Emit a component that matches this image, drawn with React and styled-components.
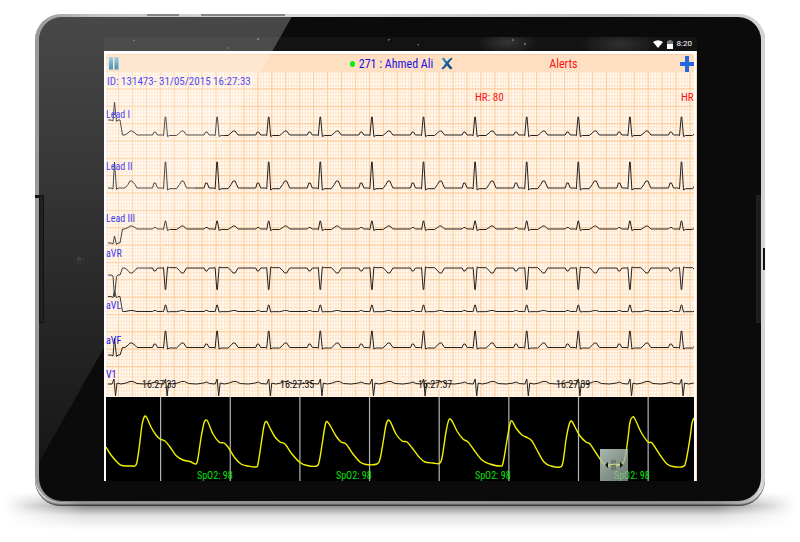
import React from "react";
import styled, { createGlobalStyle } from "styled-components";

const BEAT = 51.6;

// offsets are y positions inside the chart: base line, R peak, S dip, T and P waves
const LEADS = [
  { name: "Lead I", labelY: 46, base: 63, r: 45, s: 64.5, t: 59, p: 60, startBase: 48, startR: 30 },
  { name: "Lead II", labelY: 98, base: 116, r: 90, s: 118, t: 109, p: 111, startBase: 116, startR: 90 },
  { name: "Lead III", labelY: 150, base: 157, r: 149, s: 158.5, t: 154, p: 155.5, startBase: 171, startR: 164 },
  { name: "aVR", labelY: 185, base: 196, r: 217.5, s: 195, t: 201, p: 199, startBase: 203, startR: 225 },
  { name: "aVL", labelY: 237, base: 239.5, r: 233, s: 240, t: 238.5, p: 238.5, startBase: 224.5, startR: 219 },
  { name: "aVF", labelY: 272, base: 275.5, r: 259, s: 277, t: 271, p: 272, startBase: 283, startR: 266 },
];

const TIMES = ["16:27:33", "16:27:35", "16:27:37", "16:27:39"];

const PULSE = [
  [0, 50], [5, 58], [12, 66], [16, 68.5], [26, 69], [29, 69], [31, 65], [33.5, 48], [36, 28], [38.5, 19.5],
  [41, 21], [45, 30], [50, 38], [54, 42], [59, 44], [64, 50], [70, 58.5], [77, 63], [84, 64.5], [90, 67],
  [92, 61], [95, 41], [98, 26], [100, 23], [102, 25], [107, 37], [113, 45], [118, 46], [122, 50], [129, 61],
  [135, 67], [142, 69], [150, 70], [152, 67], [155, 48], [158, 29], [160.5, 24.5], [164, 31], [169, 40],
  [174, 45], [179, 47], [186, 57], [194, 65.5], [201, 68.5], [211, 69], [213.5, 63], [216, 48], [219, 29],
  [221, 24.5], [225, 30], [230, 39], [235, 45], [240, 47], [247, 57], [254, 65], [260, 67.5], [271, 67],
  [274, 62], [277, 46], [280, 28], [282.5, 23], [285, 26], [290, 37], [296, 44], [301, 45], [307, 52],
  [313, 60], [319, 65], [327, 66], [333, 66.5], [336, 61], [340, 35], [343, 22.5], [346, 24], [351, 34],
  [357, 42], [362, 45], [368, 53], [376, 63], [384, 67], [394, 69], [397, 66], [401, 43], [404, 27],
  [406, 24], [410, 31], [416, 38], [422, 41], [426, 44], [431, 53], [438, 65], [445, 69], [454, 70],
  [457, 65], [460, 43], [463, 28], [465.5, 24], [469, 30], [474, 39], [480, 45], [484, 47], [490, 56],
  [497, 66], [502, 69], [515, 67.5], [519, 61], [522, 41], [524, 25], [526.5, 20], [529, 22], [535, 35],
  [542, 45], [546, 46], [554, 58], [561, 67], [567, 69.5], [577, 69.5], [580, 64], [584, 41], [586, 26],
  [588, 21],
];

function leadPath({ base, r, s, t, p, startBase, startR }) {
  const d = [
    `M2 ${startBase}H5L7 ${startBase + 1}L8.5 ${startR}L10.5 ${startBase + 1.5}`,
    `L12 ${startBase}H14L16.5 ${base}H19L22 ${(base + t) / 2}L24 ${t}H26L29 ${(base + t) / 2}L31 ${base}`,
  ];
  for (let i = 0; i < 11; i += 1) {
    const x = 59.5 + i * BEAT;
    d.push(
      `H${x - 13}L${x - 11.5} ${p}H${x - 10}L${x - 8} ${base}H${x - 3}L${x - 2} ${s - (s - base) / 2}`,
      `L${x - 0.3} ${r}H${x + 0.3}L${x + 2} ${s}L${x + 4} ${base + (s - base) / 3}`,
      `H${x + 11}L${x + 14} ${(base + t) / 2}L${x + 16} ${t}H${x + 18}L${x + 21} ${base}`
    );
  }
  return d.join("");
}

function chestPath() {
  const d = ["M2 312H6"];
  for (let i = 0; i < 12; i += 1) {
    const x = 8 + i * BEAT;
    d.push(
      `L${x - 2} 312L${x} 307L${x + 1.5} 324L${x + 3} 311L${x + 7} 312L${x + 12} 311`,
      `L${x + 16} 309.5H${x + 19}L${x + 23} 311.5L${x + 31} 312L${x + 38} 311L${x + 41} 310L${x + 44} 311.5`
    );
  }
  return d.join("");
}

function smoothPath(points) {
  let d = `M${points[0].join(" ")}`;
  for (let i = 0; i < points.length - 1; i += 1) {
    const a = points[Math.max(i - 1, 0)];
    const b = points[i];
    const c = points[i + 1];
    const e = points[Math.min(i + 2, points.length - 1)];
    d += `C${b[0] + (c[0] - a[0]) / 6} ${b[1] + (c[1] - a[1]) / 6} ${c[0] - (e[0] - b[0]) / 6} ${
      c[1] - (e[1] - b[1]) / 6
    } ${c[0]} ${c[1]}`;
  }
  return d;
}

function EcgChart() {
  return (
    <Chart $height={325} role="img" aria-label="ECG leads">
      <defs>
        <pattern id="minor" x="12" y="-1" width="2.788" height="3.47" patternUnits="userSpaceOnUse">
          <path d="M0 .5H2.788M.5 0V3.47" stroke="#ffe4c8" strokeWidth="1" />
        </pattern>
        <pattern id="major" x="11.9" y="-1" width="13.94" height="17.35" patternUnits="userSpaceOnUse">
          <path d="M0 .6H13.94M.6 0V17.35" stroke="#fdcd9b" strokeWidth="1.1" />
        </pattern>
      </defs>
      <rect width="100%" height="100%" fill="#fffdf9" />
      <rect width="100%" height="100%" fill="url(#minor)" />
      <rect width="100%" height="100%" fill="url(#major)" />
      <Label $size={11} x="1" y="13">ID: 131473- 31/05/2015 16:27:33</Label>
      <Label $size={11} $color="#fb1212" x="369" y="29">HR: 80</Label>
      <Label $size={11} $color="#fb1212" x="575" y="29">HR</Label>
      {LEADS.map((lead) => (
        <g key={lead.name}>
          <Trace d={leadPath(lead)} />
          <Label $size={10} x="0" y={lead.labelY}>{lead.name}</Label>
        </g>
      ))}
      <Trace d={chestPath()} />
      <Label $size={10} x="0" y="306">V1</Label>
      {TIMES.map((time, i) => (
        <Label key={time} $size={10} $color="#111" x={36 + i * 138} y="316">{time}</Label>
      ))}
    </Chart>
  );
}

function PulseChart() {
  return (
    <PulsePanel>
      <Chart $height={84} role="img" aria-label="SpO2 pulse wave">
        {[...Array(8)].map((_, i) => (
          <rect key={i} x={54 + i * 69.65} width="1.2" height="84" fill="#b4b4b4" />
        ))}
        <path d={smoothPath(PULSE)} fill="none" stroke="#f2f200" strokeWidth="1.4" />
        {[...Array(4)].map((_, i) => (
          <Label key={i} $size={10} $color="#0be00b" x={91 + i * 139} y="82">SpO2: 98</Label>
        ))}
      </Chart>
      <ResizeHandle aria-label="Resize panel">
        <svg width="18" height="12" viewBox="0 0 18 12">
          <path d="M6 1h5v10H6z" fill="#6d7a72" />
          <path d="M0 6l3-3v6zM18 6l-3-3v6z" fill="#111" />
          <path d="M3 6Q9 4.500 15 5.500" fill="none" stroke="#d6dc8c" />
        </svg>
      </ResizeHandle>
    </PulsePanel>
  );
}

function App() {
  return (
    <Page>
      <GlobalStyle />
      <Tablet>
        <Face>
          <Screen>
            <StatusBar>
              <svg width="10" height="8" viewBox="0 0 10 8">
                <path d="M0 2Q5-1.600 10 2L5 8z" fill="#fff" />
              </svg>
              <svg width="6" height="9" viewBox="0 0 6 9">
                <path d="M1.500 0h3v1H6v8H0V1h1.500z" fill="#777" />
                <path d="M0 4h6v5H0z" fill="#fff" />
              </svg>
              <Clock>8:20</Clock>
            </StatusBar>
            <Monitor>
              <Toolbar>
                <IconButton aria-label="Pause">
                  <svg width="12" height="15" viewBox="0 0 12 15">
                    <defs>
                      <linearGradient id="pause" x1="0" y1="0" x2="0" y2="1">
                        <stop offset="0" stopColor="#8cc4da" />
                        <stop offset=".6" stopColor="#3390bd" />
                        <stop offset="1" stopColor="#176f9f" />
                      </linearGradient>
                    </defs>
                    <path d="M0 1h4v12.500H0zM5.500 1h4v12.500h-4z" fill="url(#pause)" />
                    <path d="M0 14.200h10" stroke="#c9c0ba" strokeWidth=".7" />
                  </svg>
                </IconButton>
                <Patient>
                  <OnlineDot />
                  <Title>271 : Ahmed Ali</Title>
                  <IconButton aria-label="Close patient">
                    <svg width="12" height="13" viewBox="0 0 12 13">
                      <defs>
                        <linearGradient id="close" x1="0" y1="0" x2="1" y2="1">
                          <stop offset="0" stopColor="#3fb0dc" />
                          <stop offset=".5" stopColor="#175c9c" />
                          <stop offset="1" stopColor="#123f80" />
                        </linearGradient>
                      </defs>
                      <path
                        d="M.5 1.500L3 .5Q4.500 3 6 4.600Q8 2 10.500.6L11.500 1.700Q9 4 7.600 6.300Q9 9 11.700 11L9.500 12.600Q7.500 10.500 6 8.500Q4 11.500 1.500 12.500L.5 11.300Q3 9 4.400 6.500Q3 4 .5 1.500z"
                        fill="url(#close)"
                      />
                    </svg>
                  </IconButton>
                </Patient>
                <Actions>
                  <Title $color="#f31515">Alerts</Title>
                  <IconButton aria-label="Add">
                    <svg width="14" height="16" viewBox="0 0 14 16">
                      <path d="M5 0h4v6h5v4H9v6H5v-6H0V6h5z" fill="#2668df" />
                    </svg>
                  </IconButton>
                </Actions>
              </Toolbar>
              <EcgChart />
              <PulseChart />
            </Monitor>
          </Screen>
          <Glare />
          <Camera />
          <Grille $side="left" />
          <Grille $side="right" />
        </Face>
        <TopKey $left={112} $width={32} />
        <TopKey $left={166} $width={84} />
        <SideNotch $side="left" $top={181} $height={3} />
        <SideNotch $side="right" $top={234} $height={22} />
      </Tablet>
    </Page>
  );
}

const GlobalStyle = createGlobalStyle`
  * {
    box-sizing: border-box;
  }

  body {
    margin: 0;
    background: #fff;
  }

  svg {
    display: block;
  }
`;

const narrow = `"Roboto Condensed", "Liberation Sans Narrow", Roboto, sans-serif`;

const Page = styled.main`
  padding: 14px 35px 36px;
  overflow: hidden;
`;

const Tablet = styled.div`
  position: relative;
  z-index: 0;
  padding: 3px 4px 5px;
  border-radius: 26px;
  background: linear-gradient(to right, #989898, #c4c4c4 8%, #d8dcde 40%, #bdbdbd 80%, #d8d3d5);
  box-shadow: inset 0 -1px 0 #6e6e6e, inset 0 -2px 0 #aaa, inset 0 -4px 0 #e6e6e6;

  &::after {
    content: "";
    position: absolute;
    z-index: -1;
    left: -30px;
    right: -30px;
    bottom: -24px;
    height: 38px;
    background: linear-gradient(to bottom, transparent, rgba(0, 0, 0, 0.45) 36%, rgba(0, 0, 0, 0.12) 62%, transparent);
    mask-image: linear-gradient(to right, transparent, #000 10%, #000 90%, transparent);
  }
`;

const Face = styled.div`
  position: relative;
  padding: 20px 64px 20px 65px;
  border-radius: 23px;
  background: #0b0b0b;
  overflow: hidden;
`;

const Screen = styled.div`
  background: #fff;
`;

const StatusBar = styled.div`
  display: flex;
  align-items: center;
  justify-content: flex-end;
  gap: 4px;
  height: 14px;
  padding-right: 5px;
  background:
    radial-gradient(circle at 5% 25%, #555 0 1px, transparent 1px),
    radial-gradient(circle at 21% 80%, #555 0 1px, transparent 1px),
    radial-gradient(circle at 26% 15%, #555 0 1px, transparent 1px),
    radial-gradient(circle at 48% 20%, #666 0 1px, transparent 1px),
    radial-gradient(circle at 53% 55%, #555 0 1px, transparent 1px),
    radial-gradient(circle at 69% 20%, #666 0 1px, transparent 1px),
    radial-gradient(circle at 71% 50%, #666 0 1px, transparent 1px),
    radial-gradient(30px 12px at 68% 40%, #363636, transparent),
    radial-gradient(40px 14px at 87% 50%, #303030, transparent),
    #131313;
`;

const Clock = styled.time`
  color: #fff;
  font: 8px/14px Roboto, sans-serif;
`;

const Monitor = styled.div`
  padding: 3px 2px 0;
  border-right: 1px solid #fbdcbd;
`;

const Toolbar = styled.header`
  display: grid;
  grid-template-columns: 1fr auto 1fr;
  align-items: center;
  height: 18px;
  padding-left: 3px;
  border-top: 1px solid #fccda0;
  border-radius: 3px 3px 0 0;
  background: #ffdfc2;
`;

const Patient = styled.div`
  display: flex;
  align-items: center;
  gap: 4px;
`;

const OnlineDot = styled.span`
  width: 5px;
  height: 6px;
  border-radius: 50%;
  background: #0cf00c;
`;

const Title = styled.span`
  color: ${(props) => props.$color || "#1a12e0"};
  font: 12px/16px ${narrow};
  white-space: nowrap;
`;

const Actions = styled.div`
  display: flex;
  align-items: center;
  justify-content: space-between;
  padding-left: 96px;
`;

const IconButton = styled.button`
  display: flex;
  justify-self: start;
  padding: 0;
  border: 0;
  background: none;
  cursor: pointer;

  ${Patient} & {
    margin-left: 4px;
  }
`;

const Chart = styled.svg`
  width: 100%;
  height: ${(props) => props.$height}px;
  overflow: hidden;
`;

const Trace = styled.path`
  fill: none;
  stroke: #222;
  stroke-width: 1;
  stroke-linejoin: round;
`;

const Label = styled.text`
  fill: ${(props) => props.$color || "#1a10ee"};
  font-family: ${narrow};
  font-size: ${(props) => props.$size}px;
`;

const PulsePanel = styled.div`
  position: relative;
  background: #000;
`;

const ResizeHandle = styled.button`
  position: absolute;
  right: 66px;
  bottom: 0;
  display: flex;
  align-items: center;
  justify-content: center;
  width: 28px;
  height: 32px;
  padding: 0;
  border: 0;
  background: linear-gradient(135deg, rgba(184, 204, 192, 0.9), rgba(150, 168, 156, 0.7));
  cursor: ew-resize;
`;

const Glare = styled.div`
  position: absolute;
  inset: 0;
  clip-path: polygon(0 0, 35% 0, 0 92%);
  background: linear-gradient(to bottom, rgba(255, 255, 255, 0.25), rgba(255, 255, 255, 0.05) 90%);
  pointer-events: none;
`;

const Camera = styled.span`
  position: absolute;
  top: 50%;
  left: 35px;
  width: 10px;
  height: 10px;
  margin-top: -5px;
  border: 1px solid #3a3a3a;
  border-radius: 50%;
  background: radial-gradient(circle, #404040 0 2px, #282828 3px);
`;

const Grille = styled.span`
  position: absolute;
  top: 178px;
  ${(props) => props.$side}: 0;
  width: 5px;
  height: 128px;
  border: 1px solid ${(props) => (props.$side === "left" ? "#151515" : "#222")};
  background: ${(props) => (props.$side === "left" ? "#202020" : "#1c1c1c")};
`;

const TopKey = styled.span`
  position: absolute;
  top: 0;
  left: ${(props) => props.$left}px;
  width: ${(props) => props.$width}px;
  height: 2px;
  background: #858585;
`;

const SideNotch = styled.span`
  position: absolute;
  top: ${(props) => props.$top}px;
  ${(props) => props.$side}: 0;
  width: ${(props) => (props.$side === "left" ? 4 : 2)}px;
  height: ${(props) => props.$height}px;
  background: #111;
`;

export default App;
